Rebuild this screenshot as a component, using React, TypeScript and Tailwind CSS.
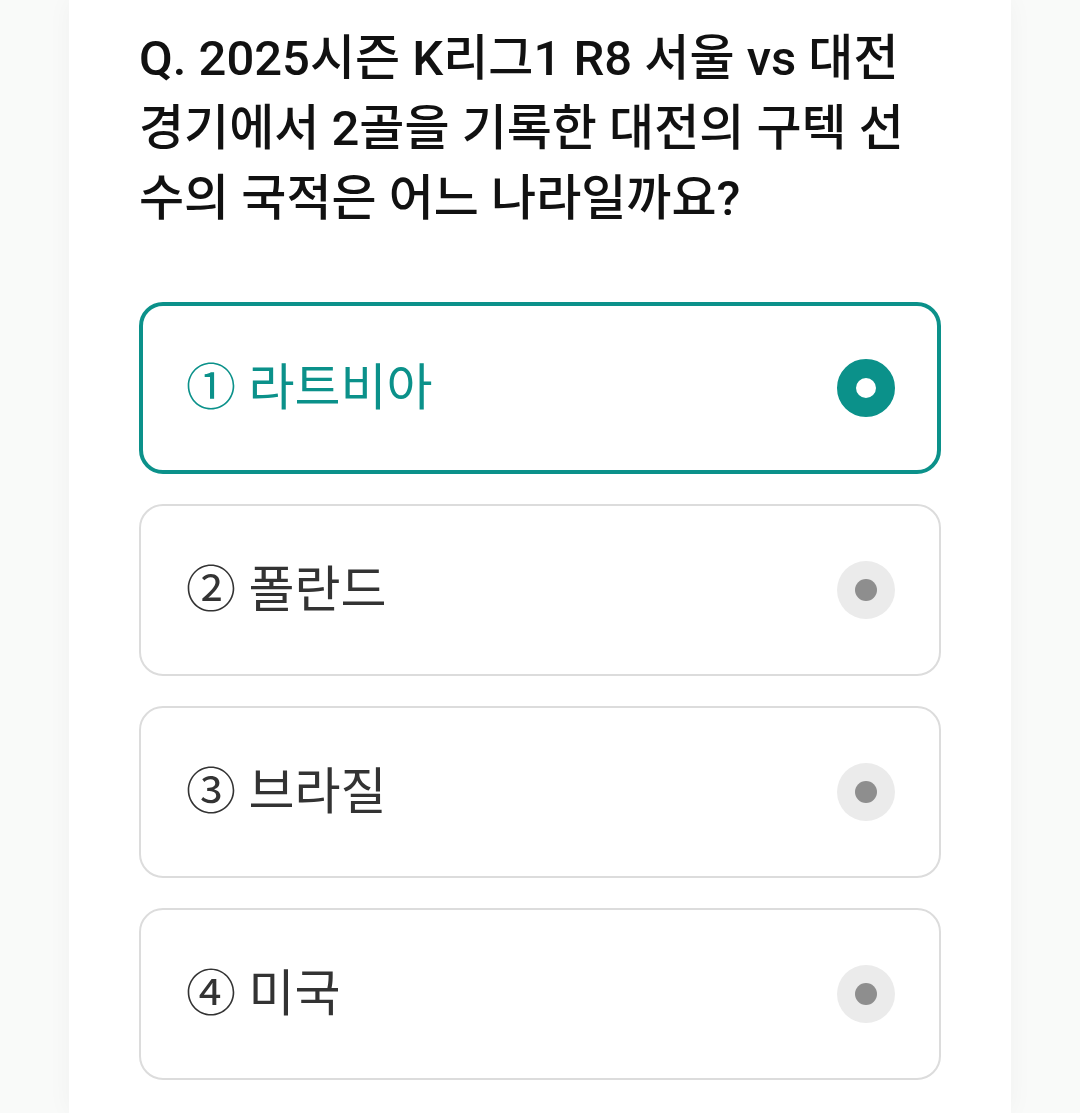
const options = ["라트비아", "폴란드", "브라질", "미국"];
const marks = ["①", "②", "③", "④"];

function OptionCard({ label, mark, selected }: { label: string; mark: string; selected: boolean }) {
  return (
    <div
      className={`h-[172px] rounded-[24px] flex items-center justify-between bg-white ${
        selected ? "border-[4px] border-[#0b918a] pl-[43px] pr-[42px]" : "border-2 border-[#dcdcdc] pl-[45px] pr-[44px]"
      }`}
    >
      <span className={`text-[50px] leading-none ${selected ? "text-[#0b918a]" : "text-[#333333]"}`}>
        {mark} {label}
      </span>
      {selected ? (
        <div className="w-[58px] h-[58px] rounded-full border-[19px] border-[#0b918a] bg-white" />
      ) : (
        <div className="w-[58px] h-[58px] rounded-full bg-[#ebebeb] flex items-center justify-center">
          <div className="w-[22px] h-[22px] rounded-full bg-[#8e8e8e]" />
        </div>
      )}
    </div>
  );
}

export default function App() {
  return (
    <div className="min-h-[1113px] bg-[#f9faf9] flex justify-center font-['Roboto','Noto_Sans_CJK_KR',sans-serif]">
      <div className="w-[942px] bg-white shadow-[0_0_24px_rgba(0,0,0,0.04)] px-[70px] pt-[24px]">
        <h2 className="text-[49px] leading-[70px] font-medium text-[#111111]">
          Q. 2025시즌 K리그1 R8 서울 vs 대전 경기에서 2골을 기록한 대전의 구텍 선수의 국적은 어느 나라일까요?
        </h2>
        <div className="mt-[68px] flex flex-col gap-[30px]">
          {options.map((o, i) => (
            <OptionCard key={i} label={o} mark={marks[i]} selected={i === 0} />
          ))}
        </div>
      </div>
    </div>
  );
}
